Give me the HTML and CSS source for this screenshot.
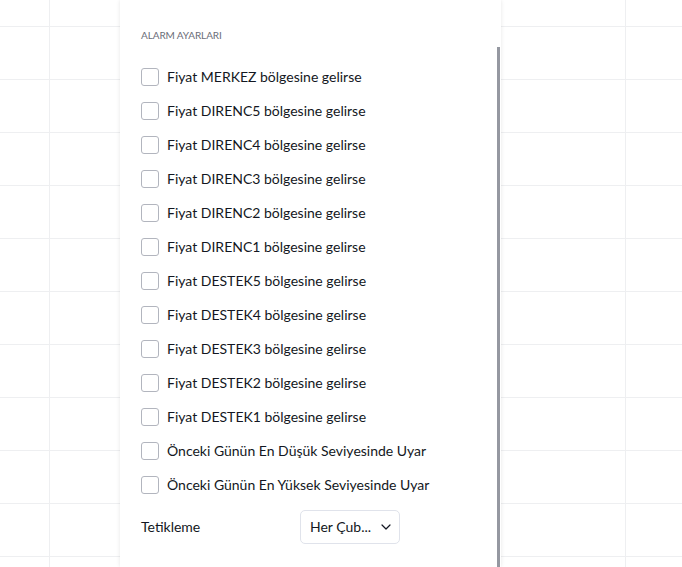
FILE: index.html
```html
<!DOCTYPE html>
<html lang="tr">
<head>
<meta charset="utf-8">
<title>Alarm Ayarları</title>
<link rel="stylesheet" href="styles.css">
</head>
<body>
<div class="canvas">
  <div class="panel">
    <div class="scroll-thumb"></div>
    <div class="title">ALARM AYARLARI</div>
    <ul class="options">
      <li class="option"><span class="box"></span><span class="label">Fiyat MERKEZ bölgesine gelirse</span></li>
      <li class="option"><span class="box"></span><span class="label">Fiyat DIRENC5 bölgesine gelirse</span></li>
      <li class="option"><span class="box"></span><span class="label">Fiyat DIRENC4 bölgesine gelirse</span></li>
      <li class="option"><span class="box"></span><span class="label">Fiyat DIRENC3 bölgesine gelirse</span></li>
      <li class="option"><span class="box"></span><span class="label">Fiyat DIRENC2 bölgesine gelirse</span></li>
      <li class="option"><span class="box"></span><span class="label">Fiyat DIRENC1 bölgesine gelirse</span></li>
      <li class="option"><span class="box"></span><span class="label">Fiyat DESTEK5 bölgesine gelirse</span></li>
      <li class="option"><span class="box"></span><span class="label">Fiyat DESTEK4 bölgesine gelirse</span></li>
      <li class="option"><span class="box"></span><span class="label">Fiyat DESTEK3 bölgesine gelirse</span></li>
      <li class="option"><span class="box"></span><span class="label">Fiyat DESTEK2 bölgesine gelirse</span></li>
      <li class="option"><span class="box"></span><span class="label">Fiyat DESTEK1 bölgesine gelirse</span></li>
      <li class="option"><span class="box"></span><span class="label">Önceki Günün En Düşük Seviyesinde Uyar</span></li>
      <li class="option"><span class="box"></span><span class="label">Önceki Günün En Yüksek Seviyesinde Uyar</span></li>
    </ul>
    <div class="field">
      <span class="field-label">Tetikleme</span>
      <div class="select">
        <span class="select-text">Her Çub...</span>
        <svg class="chevron" width="10" height="6" viewBox="0 0 10 6"><path d="M1 1l4 4 4-4" fill="none" stroke="#131722" stroke-width="1.2" stroke-linecap="round" stroke-linejoin="round"/></svg>
      </div>
    </div>
  </div>
</div>
</body>
</html>
```
FILE: styles.css
```css
html, body {
  margin: 0;
  padding: 0;
  height: 100%;
}
body {
  font-family: "Lato", "Liberation Sans", Arial, sans-serif;
  color: #131722;
  background-color: #ffffff;
  background-image:
    linear-gradient(to right, #eeeff1 1px, transparent 1px),
    linear-gradient(to bottom, #eeeff1 1px, transparent 1px);
  background-size: 192px 100%, 100% 53px;
  background-position: 49px 0, 0 26px;
  overflow: hidden;
}
.canvas {
  height: 100%;
  display: flex;
}
.panel {
  position: relative;
  margin-left: 120px;
  width: 381px;
  height: 100%;
  background: #ffffff;
  box-shadow: 0 0 4px rgba(0, 0, 0, 0.10);
  padding-left: 21px;
  box-sizing: border-box;
}
.scroll-thumb {
  position: absolute;
  left: 377px;
  top: 47px;
  width: 3px;
  bottom: 0;
  background: #9598a1;
}
.title {
  margin-top: 27px;
  height: 16px;
  line-height: 16px;
  font-size: 10px;
  color: #6a6d78;
  letter-spacing: -0.1px;
}
.options {
  list-style: none;
  margin: 17px 0 0;
  padding: 0;
}
.option {
  height: 34px;
  display: flex;
  align-items: center;
  gap: 8px;
}
.box {
  width: 18px;
  height: 18px;
  box-sizing: border-box;
  border: 1px solid #b2b5be;
  border-radius: 3px;
  flex: none;
}
.label {
  font-size: 14px;
  line-height: 18px;
  margin-bottom: 1px;
}
.field {
  margin-top: 8px;
  height: 34px;
  display: flex;
  align-items: center;
}
.field-label {
  width: 159px;
  font-size: 14px;
  line-height: 18px;
  margin-bottom: 1px;
}
.select {
  width: 100px;
  height: 34px;
  box-sizing: border-box;
  border: 1px solid #e0e3eb;
  border-radius: 5px;
  display: flex;
  align-items: center;
  padding: 0 8px 0 9px;
  justify-content: space-between;
}
.select-text {
  font-size: 14px;
  line-height: 18px;
  margin-bottom: 1px;
}
.chevron {
  display: block;
}
```
